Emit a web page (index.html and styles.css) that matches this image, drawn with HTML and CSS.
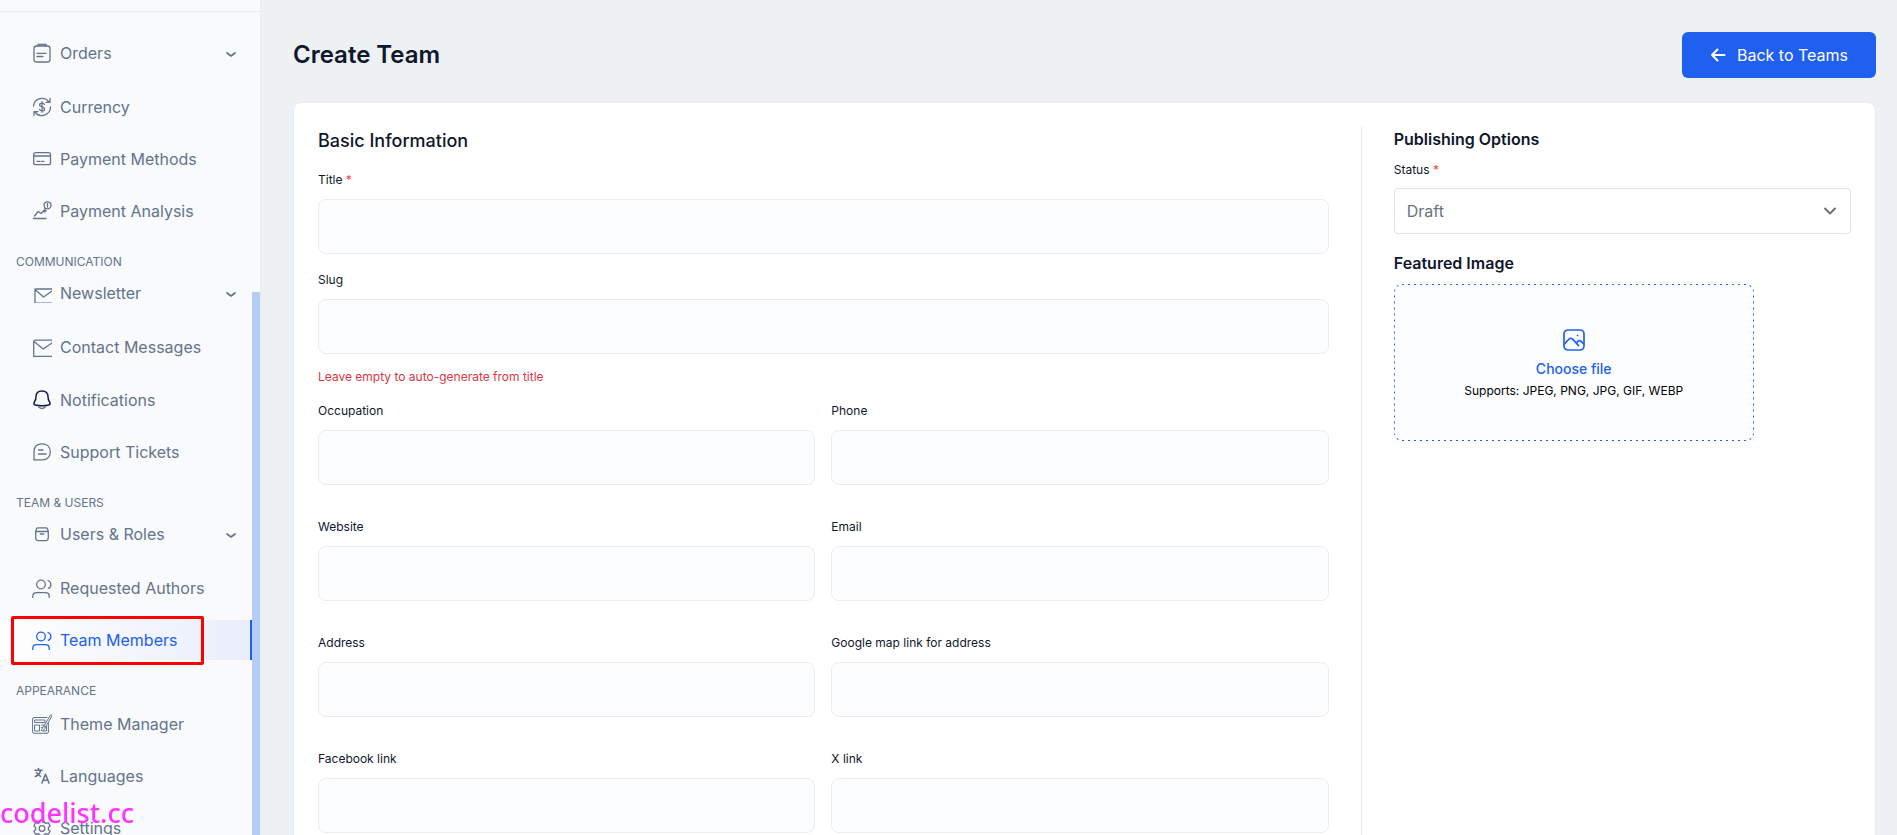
FILE: index.html
```
<!DOCTYPE html>
<html lang="en">
<head>
    <meta charset="UTF-8">
    <meta name="viewport" content="width=device-width, initial-scale=1.0">
    <title>Create Team</title>
    <link rel="stylesheet" href="styles.css">
</head>
<body>
    <aside class="sidebar">
        <nav class="sidebar-nav">
            <ul class="nav-list">
                <li class="nav-group">
                    <a href="#" class="nav-link">
                        <svg class="nav-icon" viewBox="0 0 20 20"><rect x="2" y="3" width="16" height="16" rx="2.500"/><path d="M6 3V1.500h8V3M5 10.300h9M5 13.500h6"/></svg>
                        Orders
                        <svg class="nav-arrow" viewBox="0 0 10 10"><path d="M1 5l4 3 4-3"/></svg>
                    </a>
                </li>
                <li>
                    <a href="#" class="nav-link">
                        <svg class="nav-icon" viewBox="0 0 20 20"><path d="M1.500 9A8.600 8.600 0 0 1 17 5M18.500 10A8.600 8.600 0 0 1 3 15M18 1.500V5.300h-4M2 18.500v-3.800h4"/><path d="M12.500 7.500c-.5-1-1.300-1.300-2.400-1.300-1.400 0-2.500.6-2.500 1.800 0 2.600 5 1.200 5 4 0 1.200-1.100 1.900-2.500 1.900-1.300 0-2.200-.5-2.600-1.600M10 4.700v10.600"/></svg>
                        Currency
                    </a>
                </li>
                <li>
                    <a href="#" class="nav-link">
                        <svg class="nav-icon" viewBox="0 0 20 20"><rect x="1.700" y="3.700" width="16.800" height="12" rx="2"/><path d="M2 7h16.500M5 12.300h3M9.500 12.300h2.500"/></svg>
                        Payment Methods
                    </a>
                </li>
                <li>
                    <a href="#" class="nav-link">
                        <svg class="nav-icon" viewBox="0 0 20 20"><circle cx="15.500" cy="4.300" r="3.500"/><path d="M15.500 2.500v3.600M1.500 17.500H14M2.500 15l3.700-4.500L9 12.500l4-4M13 7v4M11 10.500l3-.5"/></svg>
                        Payment Analysis
                    </a>
                </li>
            </ul>

            <h6 class="nav-title">Communication</h6>
            <ul class="nav-list">
                <li class="nav-group">
                    <a href="#" class="nav-link">
                        <svg class="nav-icon" viewBox="0 0 20 20"><path d="M20 6H3.500Q3 6 3 6.500v13q0 .7.700.7H20M3.500 7l8 7 8.500-6"/></svg>
                        Newsletter
                        <svg class="nav-arrow" viewBox="0 0 10 10"><path d="M1 5l4 3 4-3"/></svg>
                    </a>
                </li>
                <li>
                    <a href="#" class="nav-link">
                        <svg class="nav-icon" viewBox="0 0 20 20"><path d="M20 3.200H3.500Q1.700 3.200 1.700 5v14.500H20M2 4.500l9.200 7.500L20 6"/></svg>
                        Contact Messages
                    </a>
                </li>
                <li>
                    <a href="#" class="nav-link nav-link-bell">
                        <svg class="nav-icon nav-icon-dark" viewBox="0 0 20 20"><path d="M10 1c-3.700 0-6 2.300-6 5.800 0 2.600-.5 3.700-1.600 5.200-1.100 1.600-.5 2.500 1.100 3 4 1 9 1 13 0 1.600-.5 2.200-1.400 1.100-3-1.100-1.500-1.600-2.600-1.600-5.200C16 3.300 13.700 1 10 1z"/><path class="bell-clapper" d="M7 17.300c1.500 1.500 4.500 1.500 6 0"/></svg>
                        Notifications
                    </a>
                </li>
                <li>
                    <a href="#" class="nav-link">
                        <svg class="nav-icon" viewBox="0 0 20 20"><path d="M2 18V9.500C2 4.500 5 1.800 10 1.800s8.300 3 8.300 8c0 5.200-3 8-8.300 8H2.300M6.500 8H11M6.500 12H14"/></svg>
                        Support Tickets
                    </a>
                </li>
            </ul>

            <h6 class="nav-title">Team &amp; Users</h6>
            <ul class="nav-list">
                <li class="nav-group">
                    <a href="#" class="nav-link">
                        <svg class="nav-icon" viewBox="0 0 20 20"><path d="M3.700 7.500h12.600v6c0 2-1.200 3.200-3.200 3.200H6.900c-2 0-3.200-1.200-3.200-3.200zM3.700 7.500l.8-2.600q.4-1 1.500-1h8q1.100 0 1.500 1l.8 2.600M8.300 10h3.400"/></svg>
                        Users &amp; Roles
                        <svg class="nav-arrow" viewBox="0 0 10 10"><path d="M1 5l4 3 4-3"/></svg>
                    </a>
                </li>
                <li>
                    <a href="#" class="nav-link">
                        <svg class="nav-icon" viewBox="0 0 20 20"><circle cx="9" cy="6.500" r="4.300"/><path d="M.8 19.500v-1.200c0-2.400 1.500-3.600 3.700-3.600h9c2.200 0 3.700 1.200 3.700 3.600v1.200M16 2.500c3.800 1.300 3.800 6.300.3 7.800"/></svg>
                        Requested Authors
                    </a>
                </li>
                <li class="nav-marked">
                    <a href="#" class="nav-link active">
                        <svg class="nav-icon" viewBox="0 0 20 20"><circle cx="9" cy="6.500" r="4.300"/><path d="M.8 19.500v-1.200c0-2.400 1.500-3.600 3.700-3.600h9c2.200 0 3.700 1.200 3.700 3.600v1.200M16 2.500c3.800 1.300 3.800 6.300.3 7.800"/></svg>
                        Team Members
                    </a>
                </li>
            </ul>

            <h6 class="nav-title">Appearance</h6>
            <ul class="nav-list">
                <li>
                    <a href="#" class="nav-link">
                        <svg class="nav-icon nav-icon-thin" viewBox="0 0 20 20"><path d="M15 3.500H2Q.6 3.500.6 5v13q0 1.300 1.400 1.300h13q1.400 0 1.400-1.300V9M3 6h10v2.500H3zM3 11h4.500v6H3zM9.500 11H12M9.500 13.500h1M14.500 12v5H11M18.700.8l-7 11.500 1.600 1L20 2zM11.700 12.300c-1.700.5-1.200 2.800-2.500 4.200 2.300.3 4-1 4.100-3.200"/></svg>
                        Theme Manager
                    </a>
                </li>
                <li>
                    <a href="#" class="nav-link">
                        <svg class="nav-icon nav-icon-bold" viewBox="0 0 20 20"><path d="M3 4.200h7M6.500 2.500v1.700M8.500 4.500C8 7.500 6 9.500 3.300 10.500M4.500 6.500c1 2 2.300 3 4 3.800M10 17l3.500-8.700L17 17M11 14.300h5"/></svg>
                        Languages
                    </a>
                </li>
                <li>
                    <a href="#" class="nav-link">
                        <svg class="nav-icon" viewBox="0 0 20 20"><circle cx="10" cy="10.500" r="2.800"/><path d="M8.300 2h3.400l.6 2.400 1.700 1 2.400-.7 1.700 3-1.700 1.800v2l1.700 1.800-1.700 3-2.400-.7-1.700 1-.6 2.400H8.300l-.6-2.400-1.700-1-2.400.7-1.700-3 1.700-1.800v-2L1.900 7.700l1.700-3 2.400.7 1.700-1z"/></svg>
                        Settings
                    </a>
                </li>
            </ul>
        </nav>
        <div class="scroll-track">
            <div class="scroll-thumb"></div>
        </div>
    </aside>

    <main class="main">
        <header class="page-header">
            <h1>Create Team</h1>
            <a href="#" class="btn-back">
                <svg viewBox="0 0 16 16"><path d="M14.500 8H2M7.500 2.500L2 8l5.500 5.500"/></svg>
                Back to Teams
            </a>
        </header>

        <form class="card">
            <section class="form-main">
                <h2>Basic Information</h2>
                <div class="field">
                    <label for="title">Title <span class="required">*</span></label>
                    <input type="text" id="title">
                </div>
                <div class="field">
                    <label for="slug">Slug</label>
                    <input type="text" id="slug">
                </div>
                <p class="help-text">Leave empty to auto-generate from title</p>

                <div class="field-grid">
                    <div class="field">
                        <label for="occupation">Occupation</label>
                        <input type="text" id="occupation">
                    </div>
                    <div class="field">
                        <label for="phone">Phone</label>
                        <input type="text" id="phone">
                    </div>
                    <div class="field">
                        <label for="website">Website</label>
                        <input type="text" id="website">
                    </div>
                    <div class="field">
                        <label for="email">Email</label>
                        <input type="text" id="email">
                    </div>
                    <div class="field">
                        <label for="address">Address</label>
                        <input type="text" id="address">
                    </div>
                    <div class="field">
                        <label for="map">Google map link for address</label>
                        <input type="text" id="map">
                    </div>
                    <div class="field">
                        <label for="facebook">Facebook link</label>
                        <input type="text" id="facebook">
                    </div>
                    <div class="field">
                        <label for="xlink">X link</label>
                        <input type="text" id="xlink">
                    </div>
                </div>
            </section>

            <section class="form-side">
                <h3>Publishing Options</h3>
                <label for="status">Status <span class="required">*</span></label>
                <div class="select-wrap">
                    <select id="status">
                        <option>Draft</option>
                        <option>Published</option>
                    </select>
                    <svg class="select-arrow" viewBox="0 0 16 16"><path d="M3 5.500L8 10.500l5-5"/></svg>
                </div>

                <h3>Featured Image</h3>
                <label for="image" class="upload-box">
                    <svg class="upload-border"><rect width="100%" height="100%" rx="8"/></svg>
                    <svg class="upload-icon" viewBox="0 0 24 24"><rect x="2" y="2" width="20" height="20" rx="4"/><path d="M2.500 16l4.300-4.800c1.200-1.300 2.600-1.300 3.800 0l6 6.500M14.500 15l1.200-1.500c1-1.200 2.300-1.200 3.300-.2l2.700 2.700M15.500 7.500h.2"/></svg>
                    <span class="upload-title">Choose file</span>
                    <span class="upload-hint">Supports: JPEG, PNG, JPG, GIF, WEBP</span>
                </label>
                <input type="file" id="image" class="file-input">
            </section>
        </form>
    </main>

    <div class="watermark">codelist.cc</div>
</body>
</html>
```
FILE: styles.css
```
*, *::after {
    box-sizing: border-box;
}

body {
    margin: 0;
    display: flex;
    height: 100vh;
    overflow: hidden;
    font-family: Inter, sans-serif;
    font-size: 16px;
    color: #0f172a;
    background: #edf1f4;
}

h1, h2, h3, h6, p, ul {
    margin: 0;
    padding: 0;
}

svg {
    fill: none;
    stroke: currentColor;
    stroke-linecap: round;
    stroke-linejoin: round;
}

/* sidebar */
.sidebar {
    flex: 0 0 261px;
    display: flex;
    height: 100vh;
    overflow: hidden;
    background: #f8fafc;
    border-right: 1px solid #e8ebef;
}

.sidebar-nav {
    flex: 1;
    margin-top: 11px;
    margin-right: -8px;
    border-top: 1px solid #e8ebef;
    padding-top: 23px;
}

.nav-list {
    list-style: none;
    padding-right: 8px;
}

.nav-list li {
    margin-bottom: 12px;
}

.nav-list .nav-group {
    margin-bottom: 16px;
}

.nav-link {
    display: flex;
    align-items: center;
    gap: 8px;
    height: 40px;
    padding-left: 32px;
    color: #64748b;
    line-height: 24px;
    text-decoration: none;
}

.nav-group .nav-link {
    height: 36px;
}

.nav-link-bell {
    height: 41px;
}

.nav-link.active {
    color: #2060ee;
    background: linear-gradient(90deg, #ffffff 0%, #e9eefb 100%);
    border-right: 2px solid #2060ee;
}

.nav-icon {
    flex: none;
    width: 20px;
    height: 20px;
    stroke-width: 1.3;
    overflow: hidden;
}

.nav-icon-dark {
    color: #0f1f45;
    stroke-width: 1.5;
}

.bell-clapper {
    stroke: #64748b;
}

.nav-icon-thin {
    stroke-width: 1;
}

.nav-icon-bold {
    stroke-width: 1.6;
}

.nav-arrow {
    width: 10px;
    height: 10px;
    margin-left: auto;
    margin-right: 16px;
    stroke-width: 1.7;
}

.nav-title {
    margin: 21px 0 3px;
    padding-left: 16px;
    color: #64748b;
    font-size: 12px;
    font-weight: 400;
    line-height: 20px;
    text-transform: uppercase;
}

.nav-marked {
    position: relative;
}

.nav-marked::after {
    content: "";
    position: absolute;
    top: -4px;
    left: 11px;
    width: 193px;
    height: 49px;
    border: 3px solid #ff0000;
    border-radius: 2px;
}

.scroll-track {
    z-index: 1;
    flex: 0 0 8px;
    display: flex;
    flex-direction: column;
    justify-content: flex-end;
}

.scroll-thumb {
    height: 65%;
    background: #b5cbf8;
}

/* page */
.main {
    flex: 1;
    min-width: 0;
    padding: 32px 21px 0 32px;
}

.page-header {
    display: flex;
    align-items: center;
    justify-content: space-between;
    margin-bottom: 24px;
}

h1 {
    font-size: 24px;
    font-weight: 600;
    line-height: 32px;
}

.btn-back {
    display: flex;
    align-items: center;
    gap: 11px;
    height: 46px;
    padding: 0 28px;
    border-radius: 6px;
    color: #ffffff;
    background: #2060ee;
    text-decoration: none;
}

.btn-back svg {
    width: 16px;
    height: 16px;
    stroke-width: 2;
}

.card {
    display: grid;
    grid-template-columns: 32fr 15fr;
    padding: 24px;
    border: 1px solid #e8ebef;
    border-radius: 8px;
    background: #ffffff;
}

.form-main {
    padding-right: 32px;
    border-right: 1px solid #e5e7eb;
}

.form-side {
    padding-left: 32px;
}

h2 {
    margin-bottom: 15px;
    font-size: 18px;
    font-weight: 500;
    line-height: 28px;
}

h3 {
    margin-bottom: 9px;
    font-size: 16px;
    font-weight: 600;
    line-height: 24px;
}

label {
    display: block;
    margin-bottom: 8px;
    font-size: 12px;
    line-height: 20px;
}

.required {
    color: #ef4444;
}

.field {
    margin-bottom: 16px;
}

.field label {
    margin-bottom: 9px;
}

.field input {
    display: block;
    width: 100%;
    height: 55px;
    padding: 0 16px;
    border: 1px solid #eaecf0;
    border-radius: 8px;
    background: #fcfdff;
    font: inherit;
}

.help-text {
    margin: -3px 0 14px;
    color: #dc3545;
    font-size: 12px;
    line-height: 20px;
}

.field-grid {
    display: grid;
    grid-template-columns: 1fr 1fr;
    gap: 16px;
}

.select-wrap {
    position: relative;
    margin-bottom: 17px;
}

.select-wrap select {
    display: block;
    width: 100%;
    height: 46px;
    padding: 0 12px;
    appearance: none;
    border: 1px solid #dfe2e6;
    border-radius: 4px;
    background: #ffffff;
    color: #6b7280;
    font: inherit;
}

.select-arrow {
    position: absolute;
    top: 15px;
    right: 13px;
    width: 16px;
    height: 16px;
    color: #6b7280;
    stroke-width: 2;
    pointer-events: none;
}

.upload-box {
    position: relative;
    display: flex;
    flex-direction: column;
    align-items: center;
    justify-content: center;
    max-width: 360px;
    height: 157px;
    padding-top: 4px;
    border-radius: 8px;
    background: #fcfdff;
    overflow: hidden;
    cursor: pointer;
}

/* short dashes with wider gaps than border-style: dashed gives */
.upload-border {
    position: absolute;
    inset: 0;
    width: 100%;
    height: 100%;
    color: #2060ee;
    stroke-width: 2;
    stroke-dasharray: 2 4;
    stroke-linecap: butt;
}

.upload-icon {
    width: 24px;
    height: 24px;
    margin-bottom: 5px;
    color: #2060ee;
    stroke-width: 1.7;
}

.upload-title {
    color: #2060ee;
    font-size: 14px;
    font-weight: 500;
    line-height: 24px;
}

.upload-hint {
    color: #000000;
}

.file-input {
    display: none;
}

.watermark {
    position: fixed;
    left: 0;
    bottom: 4px;
    color: #ff33ff;
    font-family: "Noto Sans", sans-serif;
    font-size: 27px;
    font-weight: 500;
    line-height: 36px;
}
```
